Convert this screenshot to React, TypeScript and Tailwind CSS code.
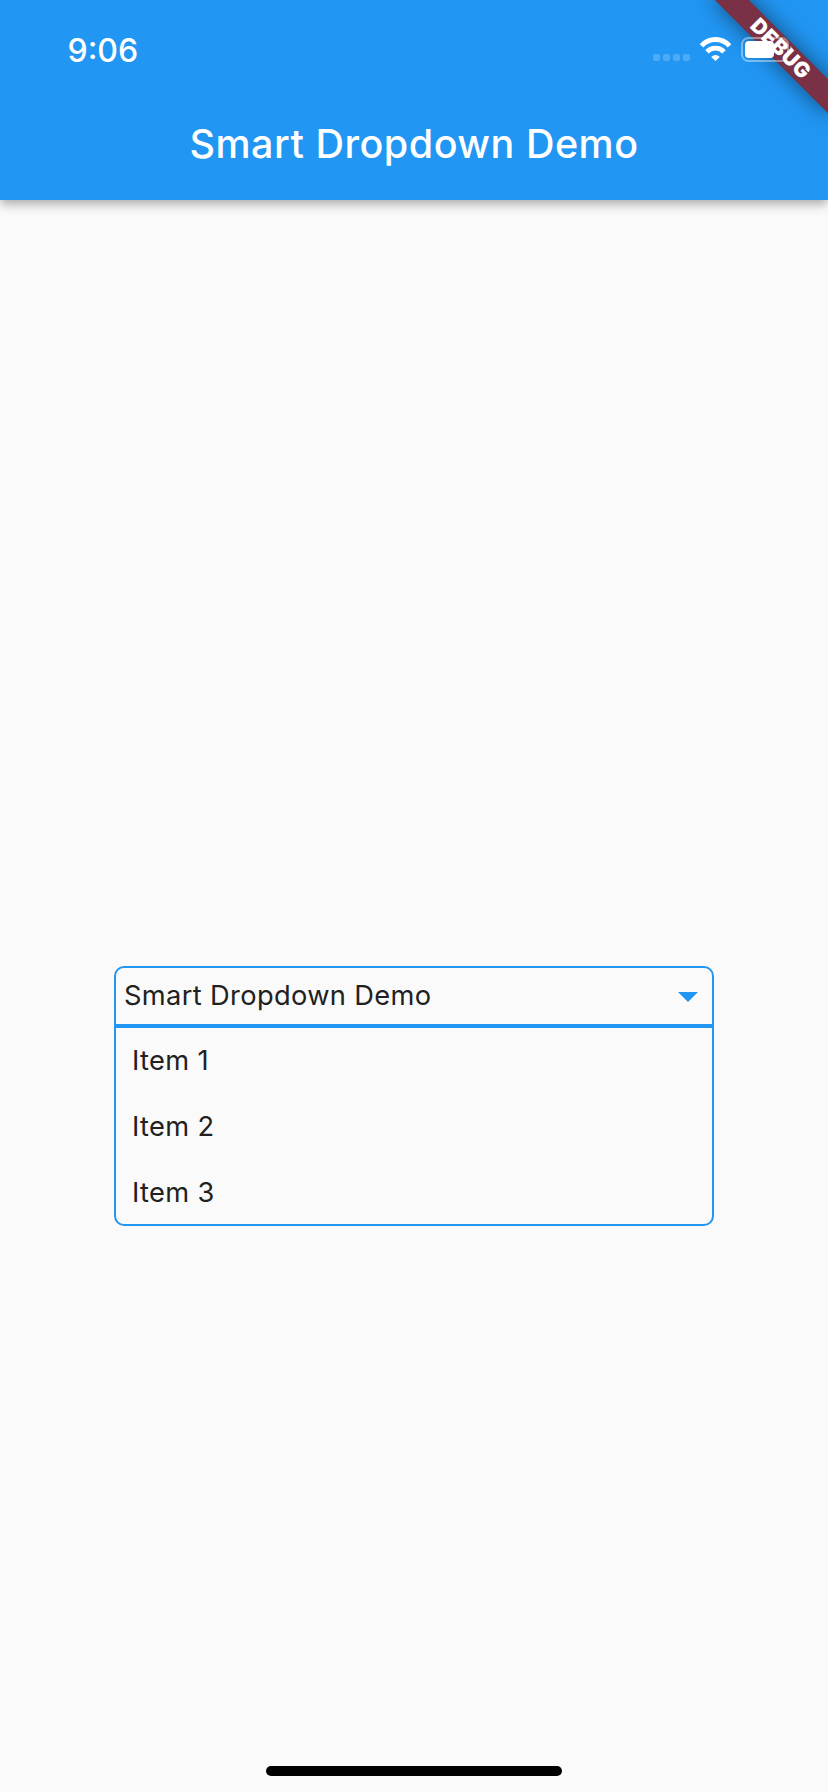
const items = ["Item 1", "Item 2", "Item 3"];

function StatusBar() {
  return (
    <div className="flex h-[88px] items-start justify-between pl-[67.5px]">
      <span className="mt-[32px] text-[32px] leading-[38px] font-[550]">9:06</span>
      <svg width="176" height="88" viewBox="652 0 176 88" fill="none">
        <g fill="#fff" fillOpacity="0.2">
          <rect x="653" y="54" width="7" height="7" rx="2" />
          <rect x="663" y="54" width="7" height="7" rx="2" />
          <rect x="673" y="54" width="7" height="7" rx="2" />
          <rect x="683" y="54" width="7" height="7" rx="2" />
        </g>
        <g stroke="#fff" strokeWidth="4.8">
          <path d="M701.5 45.8C709 37.4 722 37.4 729.5 45.8" />
          <path d="M707 51.8C711.5 47 719.5 47 724 51.8" />
        </g>
        <path d="M711.2 57Q715.5 53 719.8 57L715.5 61Z" fill="#fff" />
        <rect x="742" y="38" width="46" height="23" rx="6.5" stroke="#fff" strokeOpacity="0.4" strokeWidth="2" />
        <rect x="745" y="41" width="29" height="17" rx="4" fill="#fff" />
        <path d="M790 46Q793 47 793 49.5T790 53Z" fill="#fff" fillOpacity="0.4" />
      </svg>
    </div>
  );
}

export default function App() {
  return (
    <div className="relative flex h-[1792px] w-[828px] flex-col overflow-hidden bg-[#fafafa] font-['Inter',sans-serif] text-[#212121]">
      <header className="h-[200px] bg-[#2196f3] text-white shadow-[0_4px_8px_-1px_rgba(0,0,0,0.2),0_8px_10px_rgba(0,0,0,0.08),0_2px_14px_rgba(0,0,0,0.08)]">
        <div className="relative z-10">
          <StatusBar />
        </div>
        <h1 className="flex h-[112px] items-center justify-center pt-[2px] text-[39.5px] font-medium tracking-[0.5px]">
          Smart Dropdown Demo
        </h1>
      </header>

      <main className="mx-auto mt-[766px] w-[600px] text-[27.25px] leading-[34px]">
        <div className="flex h-[60px] items-center justify-between rounded-t-[10px] border-2 border-[#2196f3] pr-[14px] pl-[8px]">
          <span className="-mt-px tracking-[0.35px]">Smart Dropdown Demo</span>
          <svg className="mt-[2px]" width="20" height="10" viewBox="0 0 20 10" fill="#2196f3">
            <path d="M0 0H20L10 10Z" />
          </svg>
        </div>
        <ul className="h-[200px] rounded-b-[10px] border-2 border-[#2196f3] pl-[16px] tracking-[0.35px]">
          {items.map((item) => (
            <li key={item} className="flex h-[66px] items-center">{item}</li>
          ))}
        </ul>
      </main>

      <div className="mx-auto mt-auto mb-[16px] h-[10px] w-[296px] rounded-full bg-black" />

      <div className="absolute top-0 left-[828px] size-0 rotate-45">
        <div className="absolute top-[56px] left-[-80px] flex h-[24px] w-[160px] items-center justify-center bg-[#7b3145] pl-[2px] text-[21px] font-black tracking-[0.5px] text-white shadow-[0_0_22px_rgba(0,0,0,0.5)]">
          DEBUG
        </div>
      </div>
    </div>
  );
}
